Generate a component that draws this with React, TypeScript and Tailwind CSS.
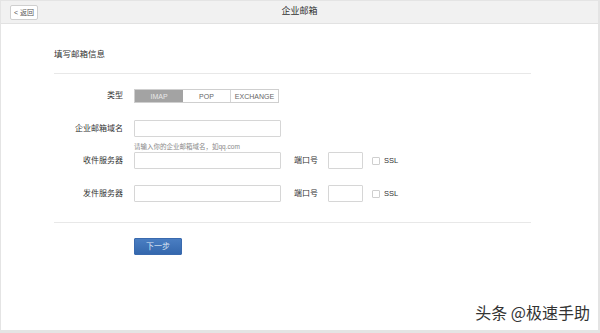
export default function App() {
  const font = { fontFamily: '"Liberation Sans", "Noto Sans CJK SC", sans-serif' };

  return (
    <div
      className="relative w-[600px] h-[333px] bg-[#e4e4e4] pt-px pl-px pr-[2px] pb-[3px] overflow-hidden"
      style={font}
    >
      <div className="h-full bg-white flex flex-col">
        {/* Header */}
        <div className="relative h-[23px] bg-[#f1f1f1] border-b border-[#e2e2e2] flex items-center justify-center">
          <button className="absolute left-[9px] top-[4px] h-[15px] px-[3px] border border-[#cfcfcf] rounded-[2px] bg-white text-[7px] text-[#555] leading-none">
            &lt; 返回
          </button>
          <span className="text-[9px] text-[#333]">企业邮箱</span>
        </div>

        {/* Body */}
        <div className="px-[53px] pt-[24px]">
          <div className="text-[8.5px] text-[#333] leading-[12px]">填写邮箱信息</div>
          <div className="mt-[13px] h-px bg-[#e8e8e8] w-[477px]" />

          {/* Type */}
          <div className="mt-[15px] flex items-center h-[14px]">
            <div className="w-[69px] text-right text-[8px] text-[#333]">类型</div>
            <div className="ml-[11px] flex h-[14px] border border-[#cfcfcf] text-[7px] leading-none">
              <div className="w-[48px] flex items-center justify-center bg-[#a3a3a3] text-[#e8e8e8]">IMAP</div>
              <div className="w-[48px] flex items-center justify-center text-[#666] border-r border-[#d5d5d5]">POP</div>
              <div className="w-[47px] flex items-center justify-center text-[#666]">EXCHANGE</div>
            </div>
          </div>

          {/* Domain */}
          <div className="mt-[17px] flex items-center h-[17px]">
            <div className="w-[69px] text-right text-[8px] text-[#333]">企业邮箱域名</div>
            <div className="ml-[11px] w-[147px] h-[17px] border border-[#d6d6d6] rounded-[1px]" />
          </div>
          <div className="mt-[6px] ml-[80px] text-[6.5px] text-[#888] leading-[8px]">请输入你的企业邮箱域名，如qq.com</div>

          {/* Incoming */}
          <div className="mt-[1px] flex items-center h-[17px]">
            <div className="w-[69px] text-right text-[8px] text-[#333]">收件服务器</div>
            <div className="ml-[11px] w-[147px] h-[17px] border border-[#d6d6d6] rounded-[1px]" />
            <div className="ml-[13px] text-[8px] text-[#333]">端口号</div>
            <div className="ml-[10px] w-[35px] h-[17px] border border-[#d6d6d6] rounded-[1px]" />
            <div className="ml-[9px] w-[8px] h-[8px] border border-[#cfcfcf] rounded-[1px]" />
            <div className="ml-[4px] text-[7.5px] text-[#333]">SSL</div>
          </div>

          {/* Outgoing */}
          <div className="mt-[16px] flex items-center h-[17px]">
            <div className="w-[69px] text-right text-[8px] text-[#333]">发件服务器</div>
            <div className="ml-[11px] w-[147px] h-[17px] border border-[#d6d6d6] rounded-[1px]" />
            <div className="ml-[13px] text-[8px] text-[#333]">端口号</div>
            <div className="ml-[10px] w-[35px] h-[17px] border border-[#d6d6d6] rounded-[1px]" />
            <div className="ml-[9px] w-[8px] h-[8px] border border-[#cfcfcf] rounded-[1px]" />
            <div className="ml-[4px] text-[7.5px] text-[#333]">SSL</div>
          </div>

          <div className="mt-[20px] h-px bg-[#e8e8e8] w-[477px]" />

          {/* Next */}
          <button className="mt-[15px] ml-[80px] w-[48px] h-[17px] rounded-[1px] bg-gradient-to-b from-[#4a7ec2] to-[#3467ad] border border-[#3a6aae] text-[8px] text-[#dce6f3] leading-none">
            下一步
          </button>
        </div>
      </div>

      {/* Watermark */}
      <div
        className="absolute right-[10px] top-[302px] text-[16px] text-[#333] leading-[20px] [text-shadow:1px_1px_0_#fff]"
        style={{ fontFamily: '"Noto Sans CJK SC", sans-serif' }}
      >
        头条 @极速手助
      </div>
    </div>
  );
}
